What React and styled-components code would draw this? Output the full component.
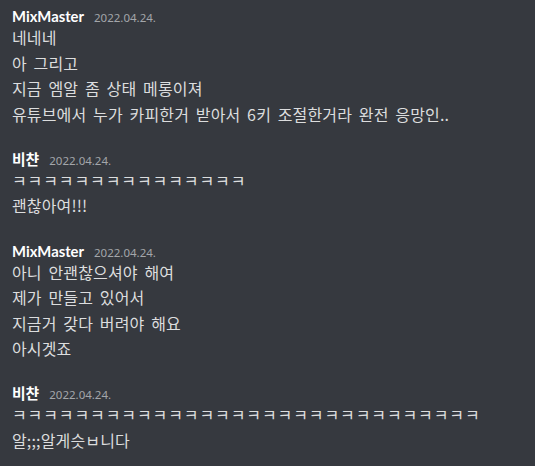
import React from 'react';
import styled, { createGlobalStyle } from 'styled-components';

const GlobalStyle = createGlobalStyle`
  html, body {
    margin: 0;
    padding: 0;
    background: #36393f;
  }
  body {
    font-family: "Noto Sans", "Noto Sans CJK KR", sans-serif;
  }
`;

const Log = styled.div`
  padding: 7px 12px 0;
  display: flex;
  flex-direction: column;
  gap: 22.5px;
`;

const Group = styled.div`
  display: flex;
  flex-direction: column;
`;

const Header = styled.div`
  display: flex;
  align-items: baseline;
  gap: 10px;
  height: 18px;
  line-height: 18px;
`;

const Author = styled.span`
  color: #ffffff;
  font-family: "Lato", "Noto Sans CJK KR", sans-serif;
  font-size: 14.8px;
  font-weight: 700;
`;

const Stamp = styled.span`
  color: #a3a6aa;
  font-family: "Noto Sans", sans-serif;
  font-size: 11.5px;
`;

const Line = styled.div`
  color: #dcddde;
  font-family: "Noto Sans CJK KR", "Noto Sans", sans-serif;
  font-size: 16px;
  line-height: 25.6px;
  word-spacing: 3px;
  letter-spacing: ${(p) => (p.$jamo ? '0.9px' : '0.15px')};
  white-space: pre;
`;

const messages = [
  {
    author: 'MixMaster',
    date: '2022.04.24.',
    lines: [
      '네네네',
      '아 그리고',
      '지금 엠알 좀 상태 메롱이져',
      '유튜브에서 누가 카피한거 받아서 6키 조절한거라 완전 응망인..',
    ],
  },
  {
    author: '비챤',
    date: '2022.04.24.',
    lines: ['ㅋ'.repeat(15), '괜찮아여!!!'],
  },
  {
    author: 'MixMaster',
    date: '2022.04.24.',
    lines: [
      '아니 안괜찮으셔야 해여',
      '제가 만들고 있어서',
      '지금거 갖다 버려야 해요',
      '아시겟죠',
    ],
  },
  {
    author: '비챤',
    date: '2022.04.24.',
    lines: ['ㅋ'.repeat(30), '알;;;알게슷ㅂ니다'],
  },
];

export default function App() {
  return (
    <>
      <GlobalStyle />
      <Log>
        {messages.map((m, i) => (
          <Group key={i}>
            <Header>
              <Author>{m.author}</Author>
              <Stamp>{m.date}</Stamp>
            </Header>
            {m.lines.map((t, j) => (
              <Line key={j} $jamo={/^ㅋ+$/.test(t)}>
                {t}
              </Line>
            ))}
          </Group>
        ))}
      </Log>
    </>
  );
}
